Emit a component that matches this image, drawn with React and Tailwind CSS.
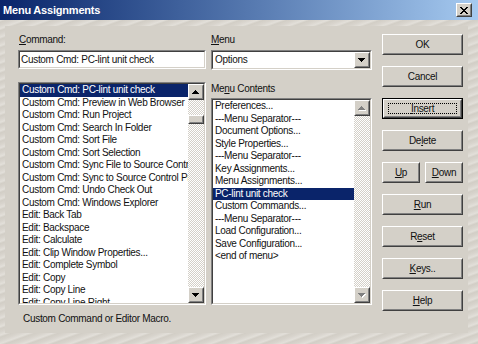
import React from 'react';

const sunkenOuter = 'border border-t-[#808080] border-l-[#808080] border-r-white border-b-white';
const sunkenInner = 'border border-t-[#404040] border-l-[#404040] border-r-[#d4d0c8] border-b-[#d4d0c8]';
const raisedOuter = 'border border-t-white border-l-white border-r-[#404040] border-b-[#404040]';
const raisedInner = 'border border-t-[#d4d0c8] border-l-[#d4d0c8] border-r-[#808080] border-b-[#808080]';
const checker = 'bg-[repeating-conic-gradient(#d4d0c8_0_25%,#ffffff_0_50%)] bg-[length:2px_2px]';

const leftItems = [
  'Custom Cmd: PC-lint unit check',
  'Custom Cmd: Preview in Web Browser',
  'Custom Cmd: Run Project',
  'Custom Cmd: Search In Folder',
  'Custom Cmd: Sort File',
  'Custom Cmd: Sort Selection',
  'Custom Cmd: Sync File to Source Control',
  'Custom Cmd: Sync to Source Control Project',
  'Custom Cmd: Undo Check Out',
  'Custom Cmd: Windows Explorer',
  'Edit: Back Tab',
  'Edit: Backspace',
  'Edit: Calculate',
  'Edit: Clip Window Properties...',
  'Edit: Complete Symbol',
  'Edit: Copy',
  'Edit: Copy Line',
  'Edit: Copy Line Right',
];

const menuItems = [
  'Preferences...',
  '---Menu Separator---',
  'Document Options...',
  'Style Properties...',
  '---Menu Separator---',
  'Key Assignments...',
  'Menu Assignments...',
  'PC-lint unit check',
  'Custom Commands...',
  '---Menu Separator---',
  'Load Configuration...',
  'Save Configuration...',
  '<end of menu>',
];

function Arrow({ up, disabled }) {
  const rows = up ? [[3, 1], [2, 3], [1, 5], [0, 7]] : [[0, 7], [1, 5], [2, 3], [3, 1]];
  return (
    <svg width="8" height="5" viewBox="0 0 8 5" shapeRendering="crispEdges">
      {disabled && rows.map(([x, w], i) => <rect key={'s' + i} x={x + 1} y={i + 1} width={w} height="1" fill="#fff" />)}
      {rows.map(([x, w], i) => <rect key={i} x={x} y={i} width={w} height="1" fill={disabled ? '#808080' : '#000'} />)}
    </svg>
  );
}

function Raised({ className = '', children }) {
  return (
    <div className={`${raisedOuter} bg-[#d4d0c8] ${className}`}>
      <div className={`${raisedInner} w-full h-full flex items-center justify-center`}>{children}</div>
    </div>
  );
}

function ScrollBtn({ up, disabled }) {
  return (
    <Raised className="w-[16px] h-[16px] shrink-0">
      <Arrow up={up} disabled={disabled} />
    </Raised>
  );
}

function Sunken({ className = '', children }) {
  return (
    <div className={`${sunkenOuter} ${className}`}>
      <div className={`${sunkenInner} w-full h-full bg-white flex overflow-hidden`}>{children}</div>
    </div>
  );
}

function Btn({ children, focused, className = 'w-full' }) {
  if (focused) {
    return (
      <div className={`h-[21px] border border-black ${className}`}>
        <Raised className="w-full h-full">
          <div className="border border-dotted border-black w-[calc(100%-6px)] h-[calc(100%-4px)] flex items-center justify-center">
            {children}
          </div>
        </Raised>
      </div>
    );
  }
  return <Raised className={`h-[21px] ${className}`}>{children}</Raised>;
}

const U = ({ children }) => <span className="underline decoration-1 underline-offset-[1px]">{children}</span>;

export default function App() {
  return (
    <div className="w-[478px] h-[344px] flex flex-col overflow-hidden font-['Liberation_Sans',Arial,sans-serif] text-[10px] tracking-[-0.3px] text-[#111] bg-[repeating-linear-gradient(160deg,#d8d4cd_0px,#e2dfd9_3px,#d2cec6_5px,#d8d4cd_8px)]">
      <div className="h-[20px] shrink-0 flex items-center justify-between bg-gradient-to-r from-[#0a246a] to-[#a6caf0] pl-[3px] pr-[6px]">
        <span className="text-white font-bold text-[11px] tracking-[-0.2px]">Menu Assignments</span>
        <Raised className="w-[16px] h-[14px]">
          <svg width="8" height="7" viewBox="0 0 8 7" shapeRendering="crispEdges">
            <path d="M0 0h2v1h-2zM6 0h2v1h-2zM1 1h2v1h-2zM5 1h2v1h-2zM2 2h4v1h-4zM3 3h2v1h-2zM2 4h4v1h-4zM1 5h2v1h-2zM5 5h2v1h-2zM0 6h2v1h-2zM6 6h2v1h-2z" fill="#000" />
          </svg>
        </Raised>
      </div>

      <div className="flex-1 mt-[6px] ml-[5px] mr-[10px] mb-[11px] bg-[#d4d0c8] flex pl-[13px] pt-[7px]">
        {/* command column */}
        <div className="w-[188px] flex flex-col">
          <div className="h-[17px] leading-[13px] pl-[1px]"><U>C</U>ommand:</div>
          <Sunken className="h-[19px]">
            <span className="pl-[1px] leading-[15px] whitespace-nowrap">Custom Cmd: PC-lint unit check</span>
          </Sunken>
          <Sunken className="h-[223px] mt-[13px]">
            <div className="flex-1 overflow-hidden">
              {leftItems.map((t, i) => (
                <div key={i} className={`h-[12.5px] leading-[12.5px] pl-[2px] whitespace-nowrap ${i === 0 ? 'bg-[#0a246a] text-white' : ''}`}>{t}</div>
              ))}
            </div>
            <div className="w-[16px] flex flex-col">
              <ScrollBtn up />
              <div className={`h-[15px] ${checker}`} />
              <Raised className="h-[9px] w-[16px]" />
              <div className={`flex-1 ${checker}`} />
              <ScrollBtn />
            </div>
          </Sunken>
          <div className="mt-[7px] pl-[5px] leading-[13px]">Custom Command or Editor Macro.</div>
        </div>

        {/* menu column */}
        <div className="w-[161px] ml-[5px] flex flex-col">
          <div className="h-[17px] leading-[13px]"><U>M</U>enu</div>
          <Sunken className="h-[20px]">
            <span className="flex-1 pl-[2px] leading-[16px]">Options</span>
            <ScrollBtn />
          </Sunken>
          <div className="h-[16px] mt-[12px] leading-[13px]">Me<U>n</U>u Contents</div>
          <Sunken className="h-[207px]">
            <div className="flex-1 overflow-hidden">
              {menuItems.map((t, i) => (
                <div key={i} className={`h-[12.5px] leading-[12.5px] pl-[2px] whitespace-nowrap ${i === 7 ? 'bg-[#0a246a] text-white' : ''}`}>{t}</div>
              ))}
            </div>
            <div className="w-[16px] flex flex-col">
              <ScrollBtn up disabled />
              <div className={`flex-1 ${checker}`} />
              <ScrollBtn disabled />
            </div>
          </Sunken>
        </div>

        {/* buttons */}
        <div className="w-[81px] ml-[10px] pt-[1px] flex flex-col gap-[11px]">
          <Btn>OK</Btn>
          <Btn>Cancel</Btn>
          <Btn focused><U>I</U>nsert</Btn>
          <Btn>De<U>l</U>ete</Btn>
          <div className="flex gap-[5px]">
            <Btn className="w-[38px]"><U>U</U>p</Btn>
            <Btn className="flex-1"><U>D</U>own</Btn>
          </div>
          <Btn><U>R</U>un</Btn>
          <Btn>R<U>e</U>set</Btn>
          <Btn><U>K</U>eys..</Btn>
          <Btn><U>H</U>elp</Btn>
        </div>
      </div>
    </div>
  );
}
